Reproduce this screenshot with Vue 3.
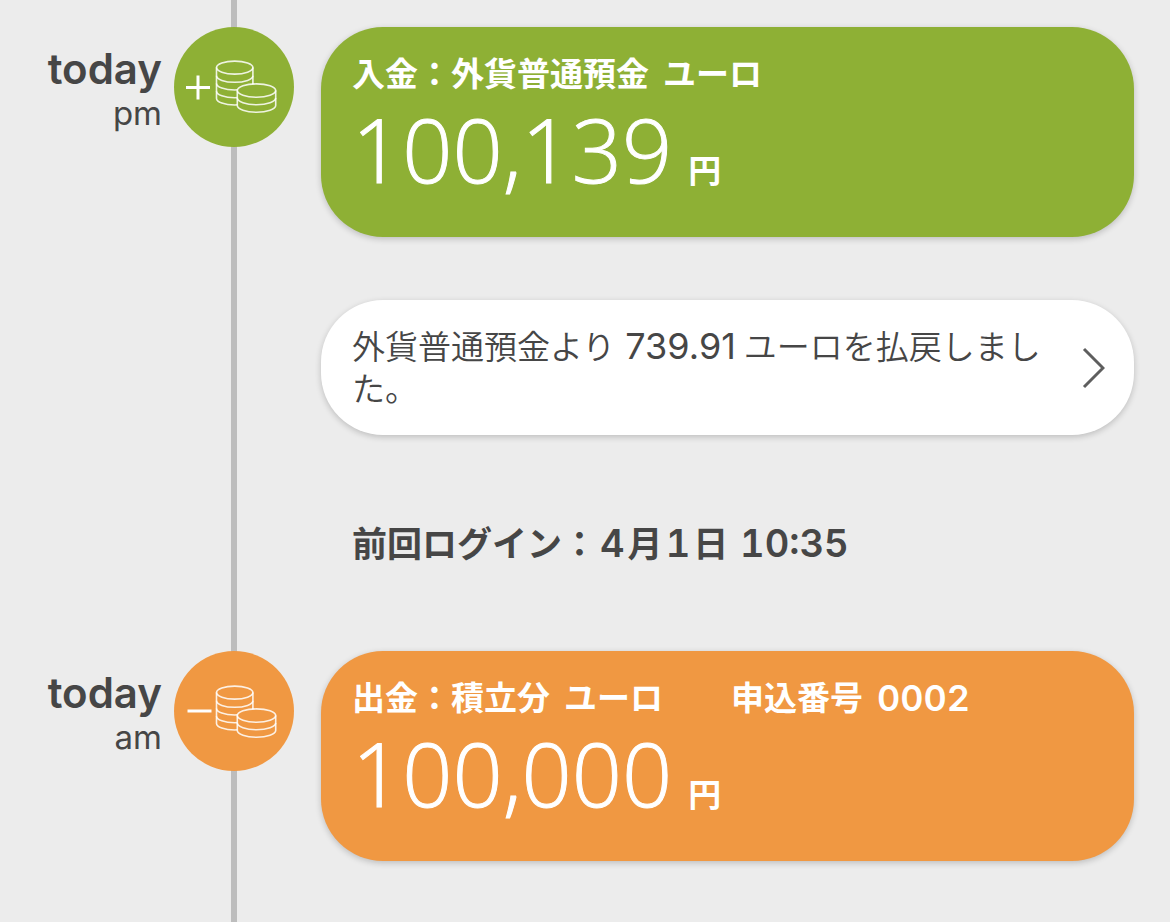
<script setup>
const entries = [
  {
    day: 'today',
    half: 'pm',
    kind: 'deposit',
    title: ['入金：外貨普通預金', 'ユーロ'],
    ref: null,
    amount: '100,139',
    notice: ['外貨普通預金より', '739.91', 'ユーロを払戻しました。'],
    login: ['前回ログイン：', '4', '月', '1', '日 ', '10:35'],
  },
  {
    day: 'today',
    half: 'am',
    kind: 'payment',
    title: ['出金：積立分', 'ユーロ'],
    ref: ['申込番号', '0002'],
    amount: '100,000',
    notice: null,
    login: null,
  },
]
const isNumber = (part) => /^\d/.test(part)
</script>

<template>
  <main class="timeline">
    <section v-for="entry in entries" :key="entry.half" class="entry" :class="entry.kind">
      <div class="when">
        <strong class="day">{{ entry.day }}</strong>
        <span class="half">{{ entry.half }}</span>
      </div>
      <svg class="badge" viewBox="0 0 120 120" aria-hidden="true">
        <circle class="disc" cx="60" cy="60" r="60" />
        <path v-if="entry.kind === 'deposit'" class="sign" d="M12 60.5H36M24 48.5V72.5" />
        <path v-else class="sign" d="M13.5 60H37.5" />
        <g class="coins" :transform="entry.kind === 'deposit' ? null : 'translate(0 1)'">
          <ellipse cx="60.7" cy="40.6" rx="18.2" ry="6.5" />
          <path d="M42.5 40.6V71.5C42.5 75.1 50.6 78 60.7 78S78.9 75.1 78.9 71.5V40.6" />
          <path d="M42.5 48.8C42.5 52.4 50.6 55.3 60.7 55.3S78.9 52.4 78.9 48.8" />
          <path d="M42.5 56.5C42.5 60.1 50.6 63 60.7 63S78.9 60.1 78.9 56.5" />
          <path d="M42.5 64.2C42.5 67.8 50.6 70.7 60.7 70.7S78.9 67.8 78.9 64.2" />
          <path class="front" d="M63.3 63.6C63.3 59.9 71.9 56.9 82.5 56.9S101.7 59.9 101.7 63.6V78.6C101.7 82.3 93.1 85.3 82.5 85.3S63.3 82.3 63.3 78.6Z" />
          <path d="M63.3 63.6C63.3 67.3 71.9 70.3 82.5 70.3S101.7 67.3 101.7 63.6" />
          <path d="M63.3 71.1C63.3 74.8 71.9 77.8 82.5 77.8S101.7 74.8 101.7 71.1" />
        </g>
      </svg>
      <div class="content">
        <article class="card">
          <h2 class="title">
            <span class="words"><span v-for="word in entry.title" :key="word">{{ word }}</span></span>
            <span v-if="entry.ref" class="words"><span v-for="word in entry.ref" :key="word" :class="{ number: isNumber(word) }">{{ word }}</span></span>
          </h2>
          <p class="sum"><span class="amount">{{ entry.amount }}</span><span class="unit">円</span></p>
        </article>
        <a v-if="entry.notice" class="notice" href="#">
          <span class="message"><span v-for="part in entry.notice" :key="part" :class="{ number: isNumber(part) }">{{ part }}</span></span>
          <svg class="chevron" viewBox="0 0 24 42" aria-hidden="true"><path d="M3 2L22 21L3 40" /></svg>
        </a>
        <p v-if="entry.login" class="login"><span v-for="part in entry.login" :key="part" :class="{ number: isNumber(part) }">{{ part }}</span></p>
      </div>
    </section>
  </main>
</template>

<style>
body {
  margin: 0;
  background: #ececec;
}
</style>

<style scoped>
.timeline {
  position: relative;
  box-sizing: border-box;
  min-height: 100vh;
  padding: 27px 36px 60px 0;
  background: #ececec;
  color: #464646;
  font-family: Inter, "Noto Sans CJK JP", sans-serif;
}
.timeline::before {
  content: "";
  position: absolute;
  top: 0;
  bottom: 0;
  left: 231px;
  width: 6px;
  background: #bdbdbd;
}
.entry {
  position: relative;
  display: grid;
  grid-template-columns: 162px 120px minmax(0, 1fr);
  column-gap: 12px;
  align-items: start;
}
.deposit { --tone: #8eb035; }
.payment { --tone: #f09842; }
.when {
  display: flex;
  flex-direction: column;
  align-items: flex-end;
  padding-top: 18px;
}
.day {
  font-size: 42px;
  font-weight: 600;
  line-height: 48px;
}
.half {
  font-size: 33px;
  line-height: 40px;
}
.badge {
  width: 120px;
  height: 120px;
}
.disc { fill: var(--tone); }
.sign {
  fill: none;
  stroke: #fff;
  stroke-width: 3;
}
.coins {
  fill: none;
  stroke: #fff;
  stroke-opacity: 0.85;
  stroke-width: 1.6;
}
.front { fill: var(--tone); }
.content { padding-left: 15px; }
.card,
.notice {
  box-sizing: border-box;
  border-radius: 62px;
  box-shadow: 0 2px 6px rgba(0, 0, 0, 0.2);
}
.card {
  min-height: 210px;
  padding: 24px 31px;
  background: var(--tone);
  color: #fff;
}
.title {
  display: flex;
  gap: 68px;
  margin: 0;
  font-size: 33px;
  font-weight: 600;
  line-height: 46px;
}
.words {
  display: flex;
  gap: 14px;
}
.sum {
  display: flex;
  align-items: baseline;
  gap: 16px;
  margin: 0;
}
.amount {
  font-family: "Open Sans", sans-serif;
  font-size: 88px;
  font-weight: 300;
  line-height: 104px;
  -webkit-text-stroke: 1px currentColor;
}
.unit {
  font-size: 33px;
  font-weight: 600;
}
.number { line-height: 1; }
.title .number {
  align-self: center;
  font-size: 36px;
  font-weight: 600;
  font-variant-numeric: tabular-nums;
}
.notice {
  display: flex;
  align-items: center;
  justify-content: space-between;
  gap: 24px;
  min-height: 135px;
  margin-top: 63px;
  padding: 24px 29px 24px 31px;
  background: #fff;
  color: inherit;
  text-decoration: none;
}
.message {
  font-size: 33px;
  font-weight: 350;
  line-height: 42px;
}
.message .number {
  margin: 0 8px 0 10px;
  font-size: 36px;
  font-weight: 400;
}
.chevron {
  flex: none;
  width: 24px;
  height: 42px;
  fill: none;
  stroke: #5e5e5e;
  stroke-width: 3;
}
.login {
  margin: 83px 0 81px;
  padding-left: 31px;
  font-size: 35px;
  font-weight: 600;
  line-height: 52px;
}
.login .number {
  margin: 0 3px;
  font-size: 38px;
  font-variant-numeric: tabular-nums;
}
</style>
